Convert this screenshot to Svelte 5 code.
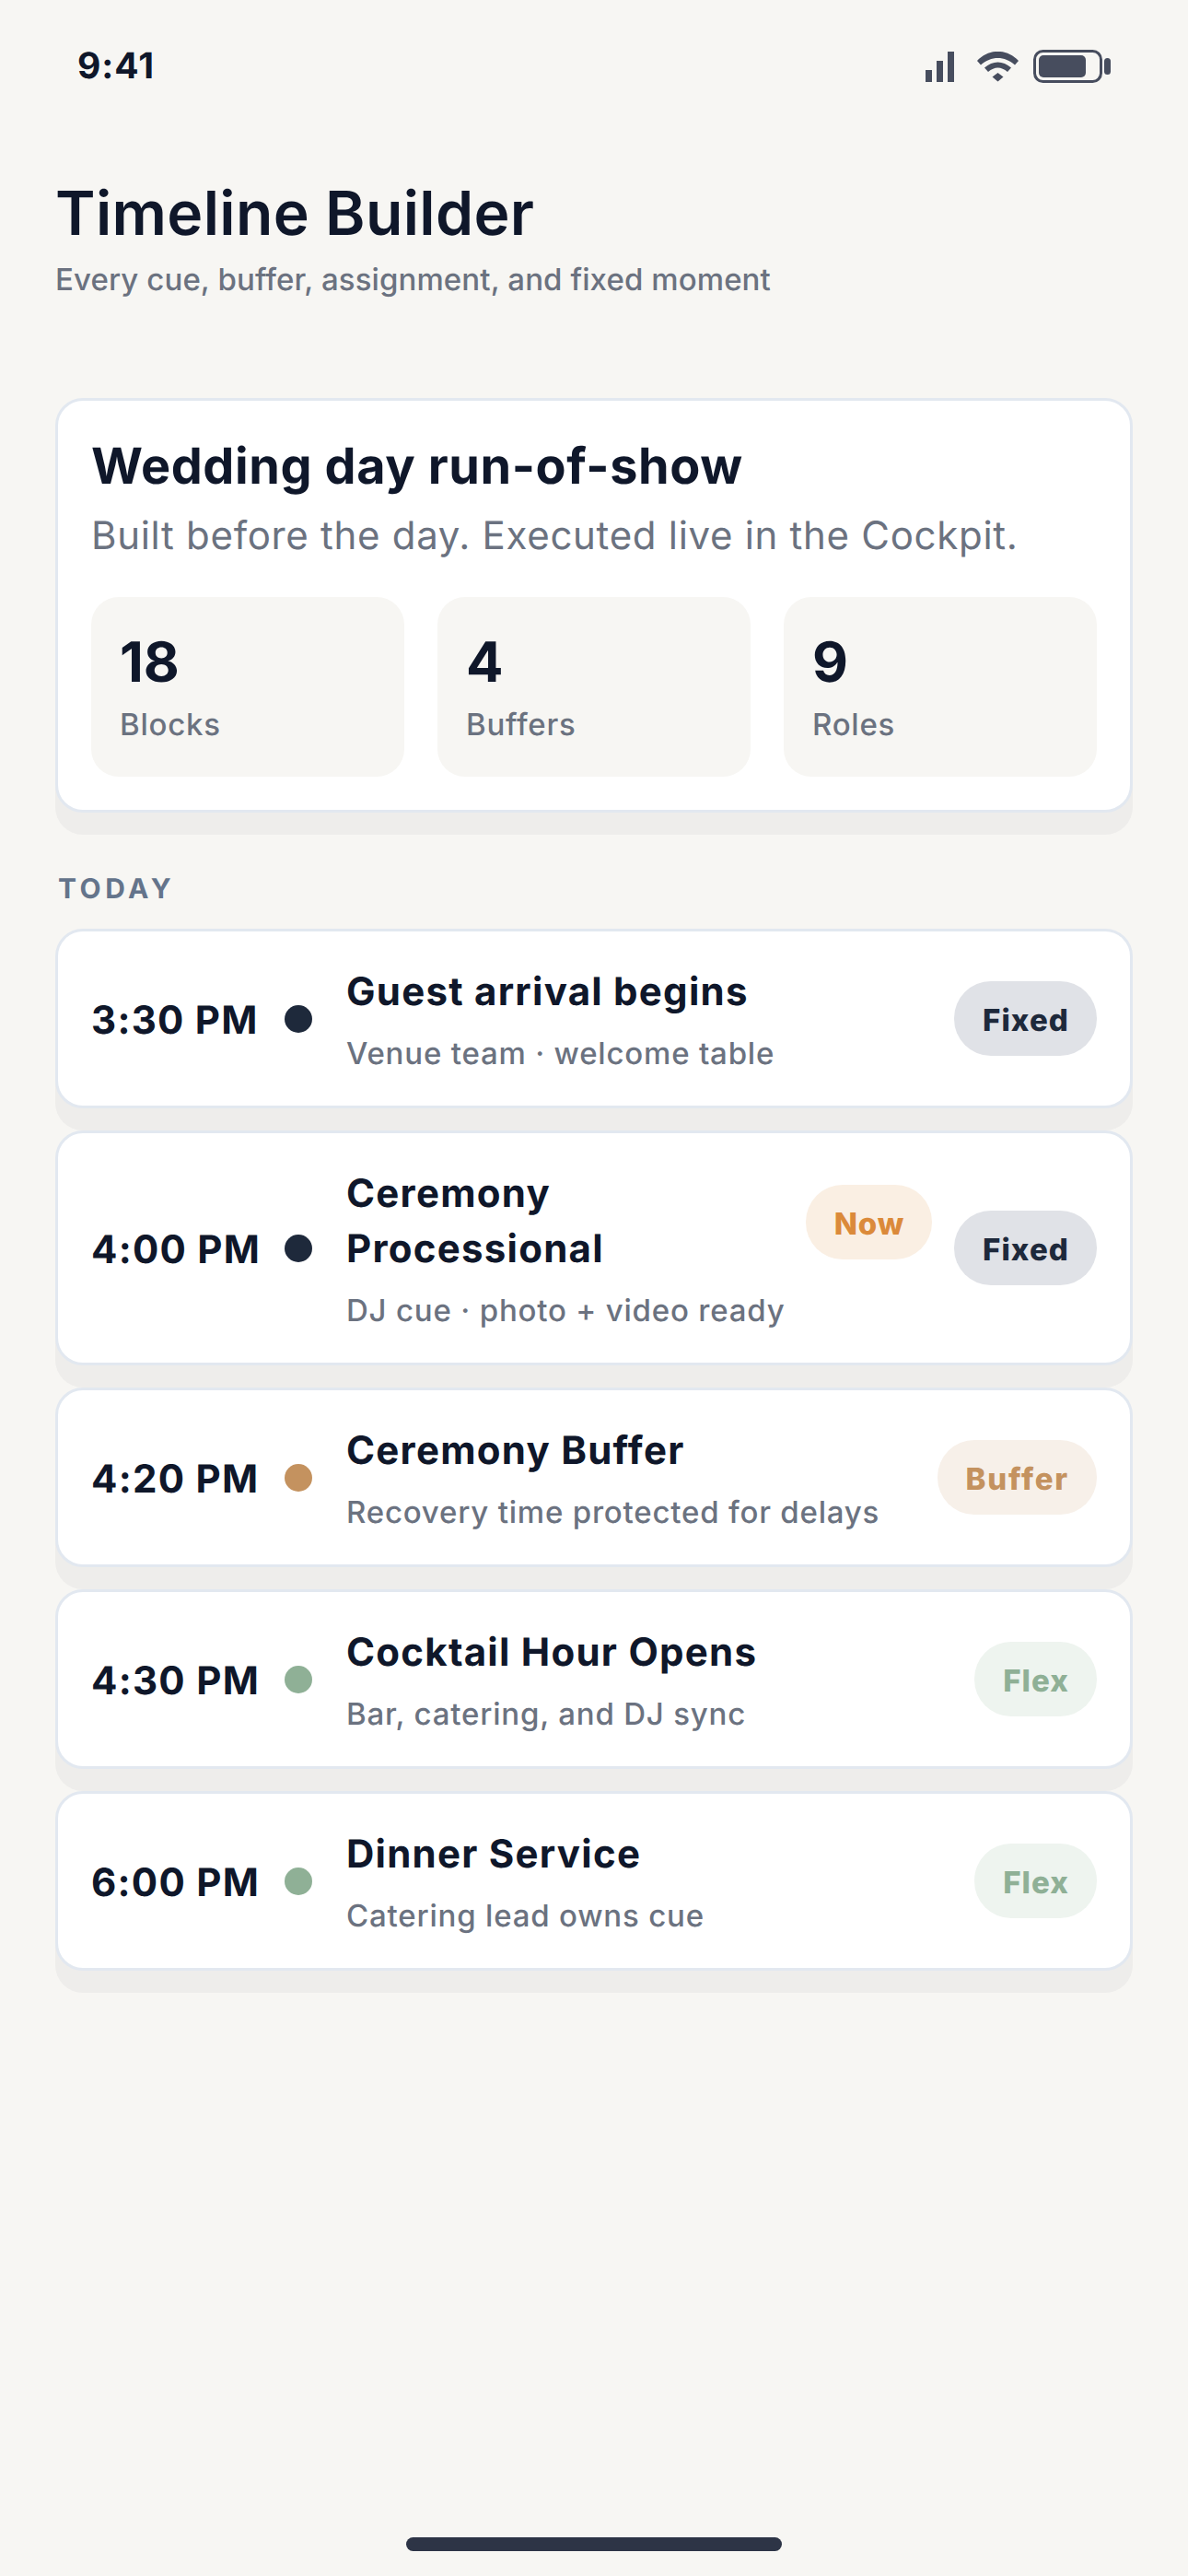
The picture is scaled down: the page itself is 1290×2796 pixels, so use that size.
<script>
  const stats = [
    { value: '18', label: 'Blocks' },
    { value: '4', label: 'Buffers' },
    { value: '9', label: 'Roles' }
  ];

  const rows = [
    { time: '3:30 PM', kind: 'fixed', title: 'Guest arrival begins', sub: 'Venue team · welcome table', badge: 'Fixed' },
    { time: '4:00 PM', kind: 'fixed', title: 'Ceremony Processional', sub: 'DJ cue · photo + video ready', badge: 'Fixed', now: true },
    { time: '4:20 PM', kind: 'buffer', title: 'Ceremony Buffer', sub: 'Recovery time protected for delays', badge: 'Buffer' },
    { time: '4:30 PM', kind: 'flex', title: 'Cocktail Hour Opens', sub: 'Bar, catering, and DJ sync', badge: 'Flex' },
    { time: '6:00 PM', kind: 'flex', title: 'Dinner Service', sub: 'Catering lead owns cue', badge: 'Flex' }
  ];
</script>

<main class="screen">
  <div class="status">
    <span class="clock">9:41</span>
    <div class="status-icons">
      <svg class="signal" width="31" height="33" viewBox="0 0 31 33" fill="#474d5e">
        <rect x="0" y="20" width="7" height="13" />
        <rect x="12" y="10" width="7" height="23" />
        <rect x="24" y="0" width="7" height="33" />
      </svg>
      <svg width="45" height="33" viewBox="0 0 45 33" fill="#474d5e">
        <path d="M0 10 C13 -3.5 32 -3.5 45 10 L41 14.5 C30 4.5 15 4.5 4 14.5 Z" />
        <path d="M8 17.5 C17 9.5 28 9.5 37 17.5 L33 22 C26 16 19 16 12 22 Z" />
        <path d="M16.5 27.5 L22.5 23 L28.5 27.5 L22.5 32.5 Z" />
      </svg>
      <svg width="84" height="36" viewBox="0 0 84 36">
        <rect x="1.5" y="1.5" width="72" height="33" rx="9" fill="none" stroke="#474d5e" stroke-width="3" />
        <rect x="6" y="6" width="51" height="24" rx="5" fill="#474d5e" />
        <rect x="77" y="9" width="7" height="18" rx="3.5" fill="#474d5e" />
      </svg>
    </div>
  </div>

  <header class="page-head">
    <h1>Timeline Builder</h1>
    <p>Every cue, buffer, assignment, and fixed moment</p>
  </header>

  <section class="card summary">
    <h2>Wedding day run-of-show</h2>
    <p class="summary-sub">Built before the day. Executed live in the Cockpit.</p>
    <div class="stats">
      {#each stats as s}
        <div class="stat">
          <div class="stat-value">{s.value}</div>
          <div class="stat-label">{s.label}</div>
        </div>
      {/each}
    </div>
  </section>

  <div class="section-label">TODAY</div>

  <div class="rows">
    {#each rows as row}
      <div class="card row">
        <div class="time">{row.time}</div>
        <span class="dot {row.kind}"></span>
        <div class="body">
          <div class="title-line">
            <div class="title">{row.title}</div>
            {#if row.now}<span class="badge now">Now</span>{/if}
          </div>
          <div class="sub">{row.sub}</div>
        </div>
        <span class="badge {row.kind}">{row.badge}</span>
      </div>
    {/each}
  </div>

  <div class="home-bar"></div>
</main>

<style>
  :global(body) { margin: 0; background: #f7f6f3; }
  .screen { position: relative; width: 1290px; height: 2796px; overflow: hidden; background: #f7f6f3; font-family: Inter, "Liberation Sans", sans-serif; text-rendering: geometricPrecision; color: #0f172a; box-sizing: border-box; padding: 0 60px; }

  .status { display: flex; align-items: center; justify-content: space-between; height: 36px; margin: 54px 24px 0; }
  .clock { font-size: 39px; font-weight: 700; line-height: 36px; letter-spacing: 1px; }
  .status-icons { display: flex; align-items: center; gap: 16px; }
  .signal { margin-right: 9px; }

  .page-head { margin-top: 99px; }
  h1 { margin: 0; font-size: 66px; font-weight: 620; line-height: 84px; letter-spacing: 0.35px; }
  .page-head p { margin: 6px 0 0; font-size: 33px; font-weight: 500; line-height: 48px; letter-spacing: 0.1px; color: #6b7280; }

  .card { background: #fff; border: 3px solid #e2e8f0; border-radius: 30px; box-shadow: 0 24px 0 rgba(15, 23, 42, 0.04); box-sizing: border-box; }

  .summary { margin-top: 105px; padding: 36px; }
  h2 { margin: 0; font-size: 54px; font-weight: 700; line-height: 72px; letter-spacing: 0.6px; }
  .summary-sub { margin: 9px 0 0; font-size: 42px; line-height: 60px; letter-spacing: 0.7px; color: #6b7280; }
  .stats { display: grid; grid-template-columns: repeat(3, 1fr); gap: 36px; margin-top: 36px; }
  .stat { height: 195px; box-sizing: border-box; padding: 35px 30px 0 31px; background: #f7f6f3; border-radius: 30px; }
  .stat-value { font-size: 60px; font-weight: 650; line-height: 72px; }
  .stat-label { margin-top: 7px; font-size: 33px; font-weight: 500; line-height: 48px; letter-spacing: 0.75px; color: #6b7280; }

  .section-label { margin: 65px 0 0 3px; font-size: 30px; font-weight: 700; letter-spacing: 4.5px; line-height: 36px; color: #64748b; }

  .rows { display: flex; flex-direction: column; gap: 24px; margin-top: 25px; }
  .row { display: flex; align-items: center; padding: 36px; }
  .time { width: 180px; margin-right: 30px; padding-top: 3px; flex: none; font-size: 42px; font-weight: 700; letter-spacing: 1.27px; white-space: nowrap; }
  .dot { flex: none; width: 30px; height: 30px; border-radius: 50%; margin-right: 37px; }
  .dot.fixed { background: #1e293b; }
  .dot.buffer { background: #c4925f; }
  .dot.flex { background: #8fb096; }
  .body { flex: 1; min-width: 0; }
  .title-line { display: flex; align-items: center; justify-content: space-between; gap: 24px; }
  .title { font-size: 42px; font-weight: 700; line-height: 60px; letter-spacing: 1.25px; }
  .sub { margin-top: 16px; font-size: 33px; font-weight: 500; line-height: 41px; letter-spacing: 0.8px; color: #6b7280; }

  .badge { flex: none; height: 81px; line-height: 85px; padding: 0 30px 0 31px; margin-left: 24px; border-radius: 40px; font-size: 33px; font-weight: 800; letter-spacing: 1.1px; }
  .badge.fixed { background: #e0e2e7; color: #1e293b; }
  .badge.now { background: #faefe3; color: #db8a3a; margin-left: 0; letter-spacing: 0.8px; }
  .badge.buffer { background: #f7f0e9; color: #c4925f; letter-spacing: 1.8px; }
  .badge.flex { background: #eef4ef; color: #8fb096; }

  .home-bar { position: absolute; left: 441px; bottom: 27px; width: 408px; height: 15px; border-radius: 8px; background: #2d3446; }
</style>
